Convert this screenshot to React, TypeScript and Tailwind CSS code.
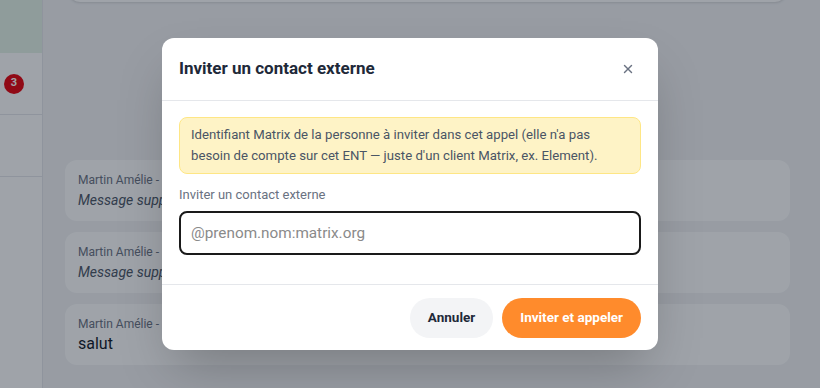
import * as React from 'react';
import { X } from 'lucide-react';

const messages = [
  { id: 1, author: 'Martin Amélie - 10:42', text: 'Message supprimé', deleted: true },
  { id: 2, author: 'Martin Amélie - 10:43', text: 'Message supprimé', deleted: true },
  { id: 3, author: 'Martin Amélie - 10:45', text: 'salut', deleted: false },
];

export default function App() {
  return (
    <div
      className="relative flex h-[388px] w-[820px] overflow-hidden bg-gray-100"
      style={{ fontFamily: 'Roboto, "Noto Sans", sans-serif' }}
    >
      {/* sidebar */}
      <aside className="flex w-[43px] shrink-0 flex-col border-r border-gray-200 bg-white">
        <div className="h-[53px] bg-[#e4f3e8]" />
        <div className="flex h-[62px] items-center border-b border-gray-200 pl-[4px]">
          <span className="flex h-[20px] w-[20px] items-center justify-center rounded-full bg-red-600 text-[11px] font-bold text-white">
            3
          </span>
        </div>
        <div className="h-[62px] border-b border-gray-200" />
      </aside>

      {/* conversation */}
      <main className="flex flex-1 flex-col pl-[22px] pr-[30px]">
        <div className="mx-[3px] mt-[-40px] h-[42px] rounded-xl bg-white shadow-sm" />
        <div className="mt-[158px] flex flex-col gap-[11px]">
          {messages.map((m) => (
            <div key={m.id} className="flex h-[61px] flex-col justify-center rounded-xl bg-white px-[13px]">
              <div className="text-[12px] leading-[18px] text-gray-500">{m.author}</div>
              <div className={m.deleted ? 'text-[14px] italic leading-[22px] text-gray-600' : 'text-[16px] leading-[22px] text-gray-900'}>
                {m.text}
              </div>
            </div>
          ))}
        </div>
      </main>

      {/* modal */}
      <div className="absolute inset-0 flex items-center justify-center bg-gray-900/40">
        <div className="w-[496px] overflow-hidden rounded-xl bg-white shadow-2xl">
          <div className="flex h-[63px] items-center justify-between border-b border-gray-200 px-[17px]">
            <h2 className="text-[17px] font-bold text-gray-800">Inviter un contact externe</h2>
            <button className="flex h-[26px] w-[26px] items-center justify-center text-gray-500">
              <X className="h-[14px] w-[14px]" strokeWidth={2.5} />
            </button>
          </div>

          <div className="px-[17px] pb-[29px] pt-[16px]">
            <div className="rounded-lg border border-amber-200 bg-amber-100 py-[7px] pl-[11px] pr-[14px] text-[13.2px] leading-[20.5px] text-gray-600">
              Identifiant Matrix de la personne à inviter dans cet appel (elle n'a pas besoin de compte sur cet ENT — juste d'un client Matrix, ex. Element).
            </div>
            <label className="mt-[11px] block text-[13px] leading-[20px] text-gray-500">Inviter un contact externe</label>
            <input
              className="mt-[6px] block h-[44px] w-full rounded-lg border-2 border-[#1a1a1a] px-[10px] text-[15.3px] text-gray-800 outline-none placeholder:text-[#8a8a8a]"
              placeholder="@prenom.nom:matrix.org"
            />
          </div>

          <div className="flex h-[66px] items-center justify-end gap-[9px] border-t border-gray-200 px-[17px]">
            <button className="h-[40px] rounded-full bg-gray-100 px-[18px] text-[13.5px] font-bold text-gray-800">
              Annuler
            </button>
            <button className="h-[40px] rounded-full bg-[#ff8b2c] px-[18px] text-[13.5px] font-bold text-white">
              Inviter et appeler
            </button>
          </div>
        </div>
      </div>
    </div>
  );
}
